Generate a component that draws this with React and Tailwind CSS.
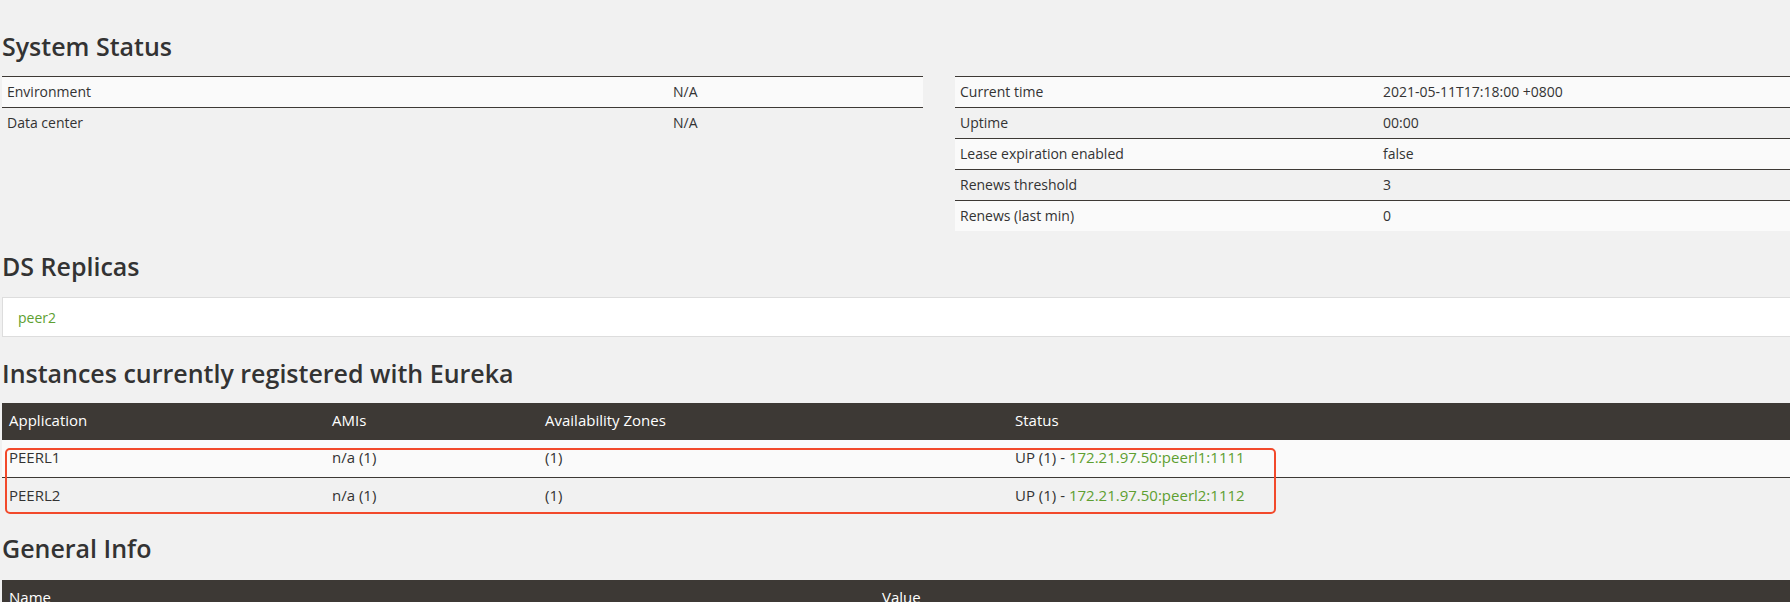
import React from "react";

const systemLeft = [
  ["Environment", "N/A"],
  ["Data center", "N/A"],
];

const systemRight = [
  ["Current time", "2021-05-11T17:18:00 +0800"],
  ["Uptime", "00:00"],
  ["Lease expiration enabled", "false"],
  ["Renews threshold", "3"],
  ["Renews (last min)", "0"],
];

const instances = [
  { app: "PEERL1", amis: "n/a (1)", zones: "(1)", link: "172.21.97.50:peerl1:1111" },
  { app: "PEERL2", amis: "n/a (1)", zones: "(1)", link: "172.21.97.50:peerl2:1112" },
];

function Heading({ children, className = "" }) {
  return (
    <h1
      className={`h-[32px] leading-[32px] text-[25px] font-semibold text-[#333] ${className}`}
      style={{ fontFamily: '"Open Sans", "Noto Sans", sans-serif' }}
    >
      {children}
    </h1>
  );
}

function InfoTable({ rows, labelWidth }) {
  return (
    <div className="w-[921px] shrink-0">
      {rows.map(([label, value], i) => (
        <div
          key={label}
          className={`flex h-[31px] items-center pb-[2px] border-t border-[#3d3935] ${
            i % 2 === 0 ? "bg-[#fafafa]" : "bg-[#f1f1f1]"
          }`}
        >
          <div className={`${labelWidth} shrink-0 px-[5px]`}>{label}</div>
          <div className="px-[5px]">{value}</div>
        </div>
      ))}
    </div>
  );
}

export default function App() {
  return (
    <div
      className="relative w-[1790px] h-[602px] overflow-hidden bg-[#f1f1f1] text-[14px] text-[#333] pl-[2px] pt-[30px]"
      style={{ fontFamily: '"Open Sans", "Noto Sans", sans-serif' }}
    >
      <Heading>System Status</Heading>
      <div className="mt-[14px] flex gap-[32px]">
        <InfoTable rows={systemLeft} labelWidth="w-[666px]" />
        <InfoTable rows={systemRight} labelWidth="w-[423px]" />
      </div>

      <Heading className="mt-[19px]">DS Replicas</Heading>
      <div className="mt-[15px] h-[40px] w-[1900px] bg-white border border-[#ddd] flex items-center pl-[15px]">
        <span className="text-[#5e9f31]">peer2</span>
      </div>

      <Heading className="mt-[20px]">Instances currently registered with Eureka</Heading>
      <div className="mt-[14px] w-[1900px] text-[15px]">
        <div className="flex h-[37px] items-center pb-[2px] bg-[#3d3935] text-white font-medium">
          <div className="w-[323px] shrink-0 pl-[7px]">Application</div>
          <div className="w-[213px] shrink-0 pl-[7px]">AMIs</div>
          <div className="w-[470px] shrink-0 pl-[7px]">Availability Zones</div>
          <div className="pl-[7px]">Status</div>
        </div>
        {instances.map((r, i) => (
          <div
            key={r.app}
            className={`flex h-[37px] items-center pb-[2px] ${
              i === 0 ? "bg-[#fafafa]" : "bg-[#f1f1f1] border-t border-[#3d3935]"
            }`}
          >
            <div className="w-[323px] shrink-0 pl-[7px]">{r.app}</div>
            <div className="w-[213px] shrink-0 pl-[7px]">{r.amis}</div>
            <div className="w-[470px] shrink-0 pl-[7px]">{r.zones}</div>
            <div className="pl-[7px]">
              UP (1) - <span className="text-[#5e9f31]">{r.link}</span>
            </div>
          </div>
        ))}
      </div>

      <Heading className="mt-[18px]">General Info</Heading>
      <div className="mt-[16px] w-[1900px] text-[15px]">
        <div className="flex h-[37px] items-center pb-[2px] bg-[#3d3935] text-white font-medium">
          <div className="w-[873px] shrink-0 pl-[7px]">Name</div>
          <div className="pl-[7px]">Value</div>
        </div>
      </div>

      {/* annotation box drawn over the two instance rows */}
      <div className="absolute left-[5px] top-[448px] w-[1271px] h-[66px] border-2 border-[#f2492b] rounded-[5px] pointer-events-none" />
    </div>
  );
}
